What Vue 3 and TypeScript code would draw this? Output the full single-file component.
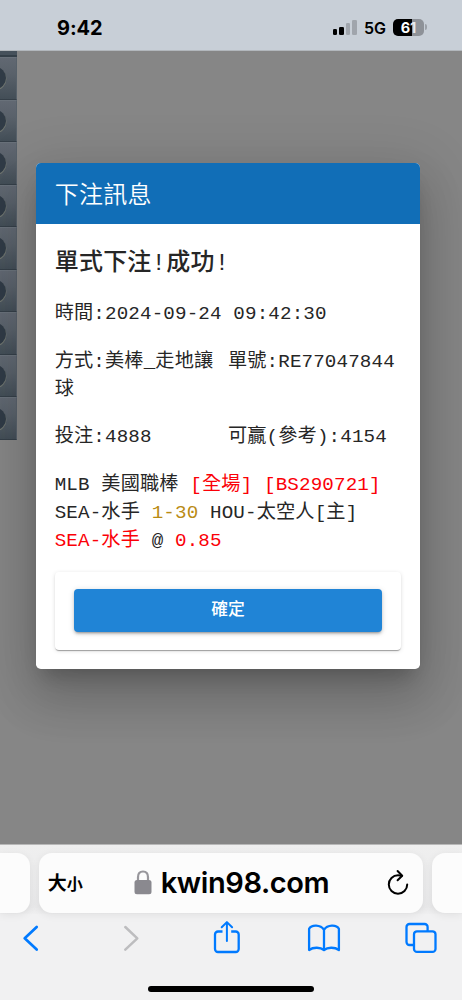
<script setup lang="ts">
const rows: number[] = Array.from({ length: 9 }, (_, i) => i)
const bars: { height: number; on: boolean }[] = [
  { height: 6, on: true },
  { height: 8, on: true },
  { height: 11.5, on: false },
  { height: 14.5, on: false },
]
</script>

<template>
  <div class="phone">
    <header class="status">
      <span class="clock">9:42</span>
      <div class="signals">
        <div class="bars">
          <i v-for="(b, i) in bars" :key="i" :class="{ on: b.on }" :style="{ height: b.height + 'px' }"></i>
        </div>
        <span class="net">5G</span>
        <div class="battery"><span>6</span><span class="rest">1</span></div>
        <i class="tip"></i>
      </div>
    </header>

    <main class="page">
      <div class="strip">
        <div class="strip-top"></div>
        <div v-for="r in rows" :key="r" class="cell"><i></i></div>
      </div>

      <section class="dialog">
        <h1>下注訊息</h1>
        <div class="body">
          <h2>單式下注!成功!</h2>
          <p class="time">時間:2024-09-24 09:42:30</p>
          <div class="pair kind">
            <p>方式:美棒_走地讓球</p>
            <p>單號:RE77047844</p>
          </div>
          <div class="pair stake">
            <p>投注:4888</p>
            <p>可贏(參考):4154</p>
          </div>
          <div class="bet">
            <p>MLB 美國職棒 <span class="red">[全場] [BS290721]</span></p>
            <p>SEA-水手 <span class="gold">1-30</span> HOU-太空人[主]</p>
            <p><span class="red">SEA-水手</span> @ <span class="red">0.85</span></p>
          </div>
          <div class="action"><button type="button">確定</button></div>
        </div>
      </section>
    </main>

    <footer class="browser">
      <div class="tabs">
        <div class="side left"></div>
        <div class="address">
          <span class="size"><b>大</b><b class="small">小</b></span>
          <div class="host">
            <svg class="lock" width="18" height="25" viewBox="0 0 18 25">
              <path d="M4 12V7.2C4 3.6 6 1.5 9 1.5s5 2.100 5 5.700V12" fill="none" stroke="#98979c" stroke-width="2.200" />
              <rect x="0.500" y="10" width="17" height="14.300" rx="2.500" fill="#8a898f" />
            </svg>
            <span>kwin98.com</span>
          </div>
          <svg class="reload" width="24" height="28" viewBox="0 0 24 28" fill="none" stroke="#000" stroke-width="2" stroke-linecap="round" stroke-linejoin="round">
            <path d="M21.200 15.500A9.200 9.200 0 1 1 12 6.300c1.400 0 2.600.1 3.800.4" />
            <path d="M11.600 2l4.600 4.700-4.600 4.600" />
          </svg>
        </div>
        <div class="side right"></div>
      </div>
      <svg class="tools" width="462" height="44" viewBox="0 914 462 44" fill="none" stroke="#007aff" stroke-width="2.300" stroke-linecap="round" stroke-linejoin="round">
        <path d="M36.700 927L24.700 938.300L36.700 949.600" stroke-width="2.700" />
        <path d="M125.300 927L137.300 938.300L125.300 949.600" stroke="#bdbdbf" stroke-width="2.500" />
        <path d="M222.500 931.500H218a3 3 0 0 0-3 3V949a3 3 0 0 0 3 3h17.700a3 3 0 0 0 3-3v-14.500a3 3 0 0 0-3-3h-4.500" stroke-linecap="butt" />
        <path d="M226.900 941V922.500M221.700 927.300l5.200-5.200 5.200 5.200" stroke-width="2" />
        <path d="M324 929.800C320.500 924.500 311.500 924.500 309.100 928.800V950C313.500 946.800 320.500 947.200 324 950C327.500 947.200 334.500 946.800 338.900 950V928.800C336.500 924.500 327.500 924.500 324 929.800V949.500" />
        <path d="M414 945h-4.500a3 3 0 0 1-3-3v-15a3 3 0 0 1 3-3H424.600a3 3 0 0 1 3 3v4.500" stroke-linecap="butt" />
        <rect x="414" y="931.300" width="21.500" height="20.600" rx="3" />
      </svg>
      <div class="home"></div>
    </footer>
  </div>
</template>

<style>
body { margin: 0; }
</style>

<style scoped>
* { box-sizing: border-box; }
h1, h2, p { margin: 0; font-weight: 400; }
.phone {
  width: 462px;
  height: 1000px;
  overflow: hidden;
  display: flex;
  flex-direction: column;
  background: #868686;
  font-family: Inter, "Noto Sans CJK TC", sans-serif;
}
.status {
  height: 51px;
  flex: none;
  display: flex;
  justify-content: space-between;
  padding: 17px 35px 0 57px;
  background: #c8cfd7;
  border-bottom: 1px solid #b2b7bc;
  color: #000;
}
.clock { font-size: 20px; line-height: 22px; font-weight: 700; letter-spacing: -0.100px; }
.signals { display: flex; align-items: center; height: 20px; }
.bars { display: flex; align-items: flex-end; gap: 2.300px; height: 15px; }
.bars i { width: 4.200px; border-radius: 1.300px; background: #a0a5ac; }
.bars i.on { background: #000; }
.net { margin: 2px 0 0 7.500px; width: 22.500px; font-size: 16px; line-height: 20px; font-weight: 600; white-space: nowrap; }
.battery {
  margin-left: 6.500px;
  width: 31px;
  height: 17px;
  display: flex;
  justify-content: center;
  border-radius: 5px;
  background: linear-gradient(90deg, #000 61%, #8e9298 61%);
  color: #fff;
  font-size: 14.500px;
  line-height: 17px;
  font-weight: 700;
}
.battery .rest { color: #e8ebee; }
.tip { width: 2px; height: 6px; margin-left: 1px; border-radius: 0 2px 2px 0; background: #9ca1a8; }

.page { height: 793px; flex: none; display: flex; align-items: flex-start; background: #868686; }
.strip { width: 16.700px; flex: none; }
.strip-top { height: 6px; background: #46515b; border-bottom: 2px solid #343f48; }
.cell {
  height: 42.560px;
  display: flex;
  align-items: center;
  overflow: hidden;
  background: linear-gradient(#616872, #59616a 40%, #434e57);
  border-top: 1px solid #69717a;
  border-bottom: 1.500px solid #353f48;
  border-right: 1px solid #57616a;
}
.cell i {
  width: 21px;
  height: 22px;
  flex: none;
  margin-left: -15.500px;
  border-radius: 50%;
  background: #303b46;
  box-shadow: 0.500px 1px 0 #6e746f;
}
.dialog {
  width: 384.500px;
  height: 505.500px;
  margin: 112.300px 0 0 19px;
  flex: none;
  border-radius: 4.800px;
  overflow: hidden;
  background: #fff;
  box-shadow: 0 13px 18px -8px rgba(0, 0, 0, .2), 0 29px 46px 4px rgba(0, 0, 0, .14), 0 11px 55px 10px rgba(0, 0, 0, .12);
}
h1 {
  height: 60.500px;
  padding-left: 19px;
  background: #116eb7;
  color: #fff;
  font: 350 24px/59px "Noto Sans CJK TC", sans-serif;
  letter-spacing: .3px;
}
.body {
  padding: 21.500px 19px 0 19px;
  color: #262626;
  font: 400 19.200px/27.800px "Liberation Mono", "Noto Sans CJK TC", monospace;
  letter-spacing: .15px;
  white-space: nowrap;
}
h2 { height: 38px; font: 500 24px/38px "Liberation Mono", "Noto Sans CJK TC", monospace; letter-spacing: .22px; }
.time { margin-top: 18px; }
.pair { display: grid; grid-template-columns: 173.200px 1fr; white-space: normal; }
.pair p:first-child { padding-right: 10px; }
.kind { margin-top: 19.800px; }
.stake { margin-top: 19.800px; }
.bet { margin-top: 20px; }
.red { color: #fb0007; }
.gold { color: #b98b14; }
.action {
  height: 78px;
  margin-top: 16.500px;
  padding: 17px 19.300px;
  border-radius: 4px;
  box-shadow: 0 2px 1px -1px rgba(0, 0, 0, .22), 0 1px 1px rgba(0, 0, 0, .14), 0 1px 4px rgba(0, 0, 0, .13);
}
button {
  display: block;
  width: 100%;
  height: 43.500px;
  padding: 0 0 4px;
  border: 0;
  border-radius: 4px;
  background: #2084d6;
  color: #fff;
  font: 500 16.800px/39px "Noto Sans CJK TC", sans-serif;
  box-shadow: 0 3px 2px -2px rgba(0, 0, 0, .2), 0 2px 3px rgba(0, 0, 0, .16), 0 1px 6px rgba(0, 0, 0, .14);
}

.browser { flex: 1; background: #f1f1f2; border-top: 1px solid #b8b8b8; overflow: hidden; }
.tabs { display: flex; justify-content: space-between; height: 69px; padding-top: 8px; background: linear-gradient(#efefef, #ebebec 70%, #e9e9ea 90%, #efeff0); }
.side, .address { height: 59.500px; background: #fcfcfc; box-shadow: 0 2px 9px rgba(0, 0, 0, .07); }
.side { width: 30px; }
.left { border-radius: 0 13px 13px 0; }
.right { border-radius: 13px 0 0 13px; }
.address { width: 384.500px; border-radius: 13px; display: flex; align-items: center; padding: 0 13px 0 9px; }
.size { width: 86.500px; flex: none; display: flex; align-items: baseline; font: 700 19px/30px "Noto Sans CJK TC", sans-serif; }
.size b { font-weight: 700; }
.size .small { font-size: 16px; }
.host { display: flex; align-items: center; gap: 8.500px; font-size: 29px; font-weight: 600; letter-spacing: -.4px; line-height: 36px; white-space: nowrap; }
.lock { margin-top: -1px; }
.reload { margin-left: auto; flex: none; }
.tools { display: block; }
.home { width: 165.500px; height: 5.500px; margin: 28px auto 0; border-radius: 3px; background: #000; }
</style>
